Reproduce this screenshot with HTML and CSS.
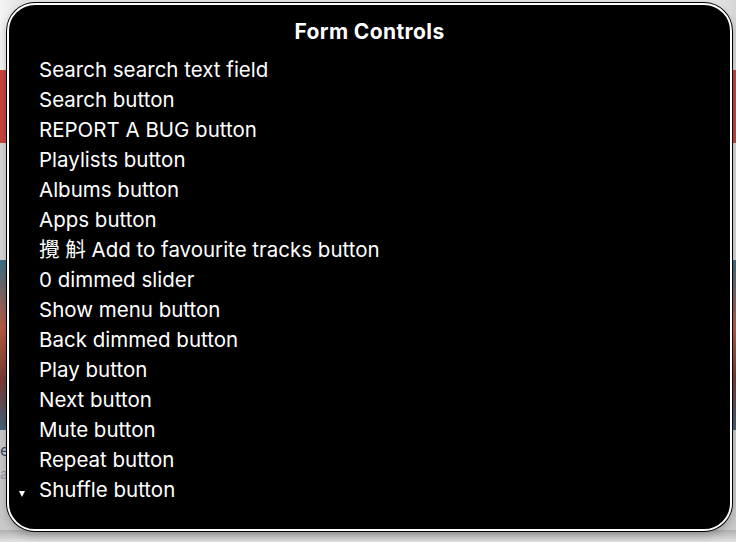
FILE: index.html
```html
<!DOCTYPE html>
<html>
<head>
<meta charset="utf-8">
<link rel="stylesheet" href="styles.css">
</head>
<body>
<div class="backdrop">
  <div class="band band-top"></div>
  <div class="band band-red"></div>
  <div class="band band-gray"></div>
  <div class="band band-photo"></div>
  <div class="band band-low"><span class="peek">e</span><span class="peek dim">ac</span></div>
  <div class="band band-shadow"></div>
</div>
<div class="rotor">
  <h1 class="rotor-title">Form Controls</h1>
  <ul class="rotor-list">
    <li class="row"><span class="mark"></span><span>Search search text field</span></li>
    <li class="row"><span class="mark"></span><span>Search button</span></li>
    <li class="row"><span class="mark"></span><span>REPORT A BUG button</span></li>
    <li class="row"><span class="mark"></span><span>Playlists button</span></li>
    <li class="row"><span class="mark"></span><span>Albums button</span></li>
    <li class="row"><span class="mark"></span><span>Apps button</span></li>
    <li class="row"><span class="mark"></span><span>攪 斛 Add to favourite tracks button</span></li>
    <li class="row"><span class="mark"></span><span>0 dimmed slider</span></li>
    <li class="row"><span class="mark"></span><span>Show menu button</span></li>
    <li class="row"><span class="mark"></span><span>Back dimmed button</span></li>
    <li class="row"><span class="mark"></span><span>Play button</span></li>
    <li class="row"><span class="mark"></span><span>Next button</span></li>
    <li class="row"><span class="mark"></span><span>Mute button</span></li>
    <li class="row"><span class="mark"></span><span>Repeat button</span></li>
    <li class="row"><span class="mark"><span class="tri"></span></span><span>Shuffle button</span></li>
  </ul>
</div>
</body>
</html>
```
FILE: styles.css
```css
* { box-sizing: border-box; }
html, body { margin: 0; padding: 0; }
body {
  width: 736px;
  height: 542px;
  overflow: hidden;
  position: relative;
  background: #d4d4d4;
  font-family: Inter, "Noto Sans", "Noto Sans CJK SC", sans-serif;
}
.backdrop {
  display: flex;
  flex-direction: column;
  height: 542px;
}
.band { flex: none; }
.band-top { height: 70px; background: linear-gradient(90deg, #f4f4f4, #e4e4e4 20px, #e4e4e4 716px, #d6d6d6); }
.band-red { height: 73px; background: #c8433f; }
.band-gray { height: 117px; background: #d6d6d6; }
.band-photo { height: 170px; background: linear-gradient(180deg, #3d6f86 0%, #b85a45 40%, #7a3b34 70%, #44607a 100%); }
.band-low {
  height: 100px;
  background: #c9c9c9;
  padding: 8px 0 0 0;
  display: flex;
  flex-direction: column;
  font-size: 16px;
  color: #2f4a66;
  line-height: 24px;
}
.peek.dim { color: #8a98a8; font-size: 14px; }
.band-shadow { flex: 1; background: linear-gradient(180deg, #b0b0b0, #e2e2e2); }

.rotor {
  position: absolute;
  left: 7px;
  top: 3px;
  width: 725px;
  height: 528px;
  background: #000;
  border: 2.5px solid #fff;
  border-radius: 28px;
  box-shadow: 0 0 0 1px #000, 0 4px 10px rgba(0,0,0,0.25);
  color: #fff;
  padding: 12px 0 0 0;
}
.rotor-title {
  margin: 0;
  text-align: center;
  font-size: 21px;
  font-weight: 700;
  line-height: 30px;
  letter-spacing: 0.4px;
}
.rotor-list {
  list-style: none;
  margin: 8px 0 0 0;
  padding: 0;
}
.row {
  display: flex;
  align-items: center;
  height: 30px;
  font-size: 20.5px;
  line-height: 30px;
  letter-spacing: 0;
}
.mark {
  width: 30px;
  flex: none;
  display: flex;
  justify-content: flex-start;
  padding-left: 10px;
  align-items: center;
}
.tri {
  width: 0;
  height: 0;
  border-left: 3.5px solid transparent;
  border-right: 3.5px solid transparent;
  border-top: 6px solid #fff;
  margin-top: 8px;
}
```
